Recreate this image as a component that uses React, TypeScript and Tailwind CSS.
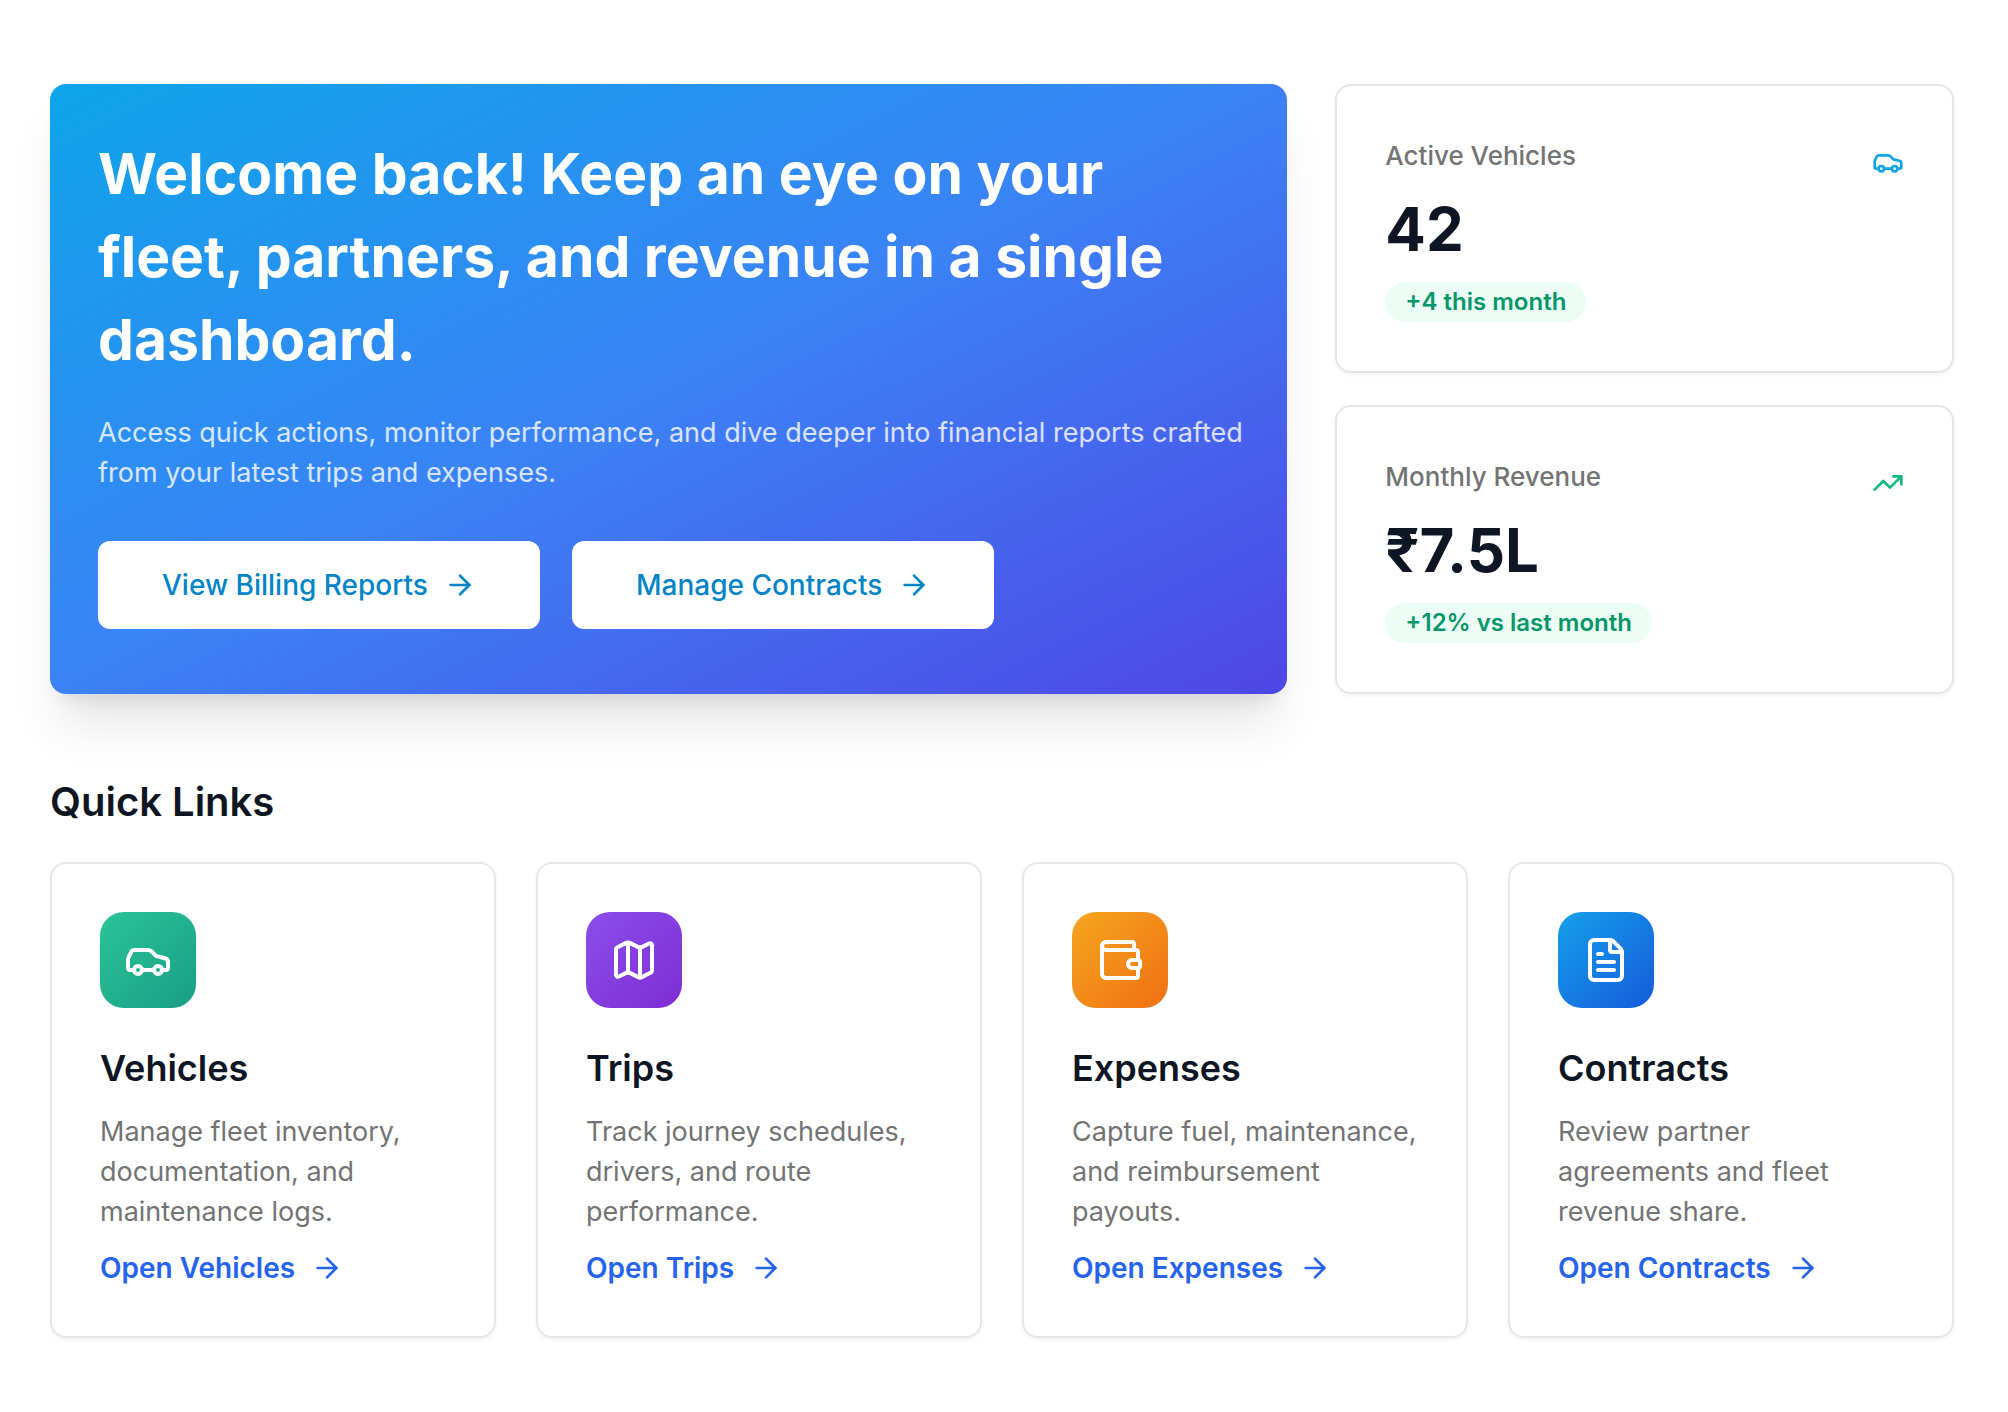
import { ArrowRight, Car, FileText, Map, TrendingUp, Wallet } from 'lucide-react';
import type { LucideIcon } from 'lucide-react';

interface Stat {
  label: string;
  value: string;
  change: string;
  icon: LucideIcon;
  iconClass: string;
}

interface QuickLink {
  title: string;
  description: string;
  href: string;
  icon: LucideIcon;
  tileClass: string;
}

const stats: Stat[] = [
  { label: 'Active Vehicles', value: '42', change: '+4 this month', icon: Car, iconClass: 'text-[#0ea5e9]' },
  { label: 'Monthly Revenue', value: '₹7.5L', change: '+12% vs last month', icon: TrendingUp, iconClass: 'text-[#10b981]' },
];

const quickLinks: QuickLink[] = [
  {
    title: 'Vehicles',
    description: 'Manage fleet inventory, documentation, and maintenance logs.',
    href: '#vehicles',
    icon: Car,
    tileClass: 'from-[#2ac497] to-[#189e86]',
  },
  {
    title: 'Trips',
    description: 'Track journey schedules, drivers, and route performance.',
    href: '#trips',
    icon: Map,
    tileClass: 'from-[#8a4eec] to-[#7f2dd2]',
  },
  {
    title: 'Expenses',
    description: 'Capture fuel, maintenance, and reimbursement payouts.',
    href: '#expenses',
    icon: Wallet,
    tileClass: 'from-[#f6a520] to-[#ef7012]',
  },
  {
    title: 'Contracts',
    description: 'Review partner agreements and fleet revenue share.',
    href: '#contracts',
    icon: FileText,
    tileClass: 'from-[#14a0ea] to-[#165bdc]',
  },
];

function HeroButton({ children }: { children: string }) {
  return (
    <button
      type="button"
      className="inline-flex h-[88px] items-center gap-4 rounded-xl bg-white px-16 text-[28px] leading-10 font-medium text-[#0284c7] hover:bg-white/90"
    >
      {children}
      <ArrowRight className="size-8" />
    </button>
  );
}

function StatCard({ stat }: { stat: Stat }) {
  const Icon = stat.icon;
  return (
    <div className="flex flex-col justify-center rounded-2xl border-2 border-[#e5e5e5] bg-white px-12 shadow-[0_2px_4px_rgba(0,0,0,0.05)]">
      <div className="flex items-start justify-between">
        <div>
          <p className="text-[26px] leading-10 font-medium text-[#737373]">{stat.label}</p>
          <p className="mt-4 text-[60px] leading-[74px] font-bold text-[#0f1623]">{stat.value}</p>
          <span className="mt-4 inline-block rounded-full bg-[#ecfdf5] px-5 py-1 text-2xl font-semibold text-[#059669]">
            {stat.change}
          </span>
        </div>
        <Icon className={`mt-[10px] size-8 ${stat.iconClass}`} />
      </div>
    </div>
  );
}

function QuickLinkCard({ link }: { link: QuickLink }) {
  const Icon = link.icon;
  return (
    <div className="rounded-2xl border-2 border-[#e5e7eb] bg-white p-12 shadow-[0_2px_4px_rgba(0,0,0,0.05)]">
      <div className={`flex size-24 items-center justify-center rounded-3xl bg-linear-to-br/srgb text-white ${link.tileClass}`}>
        <Icon className="size-12" />
      </div>
      <h3 className="mt-8 text-4xl leading-14 font-semibold text-[#0f1623]">{link.title}</h3>
      <p className="mt-4 text-[27px] leading-10 text-[#737373]">{link.description}</p>
      <a
        href={link.href}
        className="mt-4 flex items-center gap-4 text-[28px] leading-10 font-semibold text-[#2563eb] hover:underline"
      >
        Open {link.title}
        <ArrowRight className="size-8" />
      </a>
    </div>
  );
}

export default function App() {
  return (
    <main className="min-h-screen bg-white py-[84px] pr-[54px] pl-[50px] font-['Inter',sans-serif]">
      <section className="grid grid-cols-[2fr_1fr] gap-12">
        <div className="rounded-2xl bg-linear-to-br/srgb from-[#0ea5e9] via-[#3b82f6] to-[#4f46e5] pt-12 pr-8 pb-[65px] pl-12 text-white shadow-[0_40px_50px_-10px_rgba(0,0,0,0.1),0_16px_20px_-12px_rgba(0,0,0,0.1)]">
          <h1 className="text-[57px] leading-[83px] font-bold">
            Welcome back! Keep an eye on your fleet, partners, and revenue in a single dashboard.
          </h1>
          <p className="mt-8 text-[27px] leading-10 text-white/80">
            Access quick actions, monitor performance, and dive deeper into financial reports crafted from your latest
            trips and expenses.
          </p>
          <div className="mt-12 flex gap-8">
            <HeroButton>View Billing Reports</HeroButton>
            <HeroButton>Manage Contracts</HeroButton>
          </div>
        </div>

        <div className="grid grid-rows-2 gap-8">
          {stats.map(stat => (
            <StatCard key={stat.label} stat={stat} />
          ))}
        </div>
      </section>

      <section className="mt-20">
        <h2 className="text-[40px] leading-14 font-semibold text-[#0f1623]">Quick Links</h2>
        <div className="mt-8 grid grid-cols-4 gap-10">
          {quickLinks.map(link => (
            <QuickLinkCard key={link.title} link={link} />
          ))}
        </div>
      </section>
    </main>
  );
}
